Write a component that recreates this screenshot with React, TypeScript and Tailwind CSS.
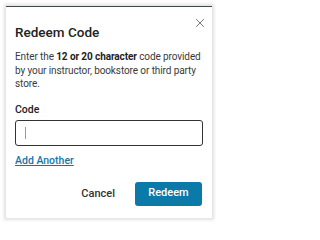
import { X } from "lucide-react";

const App = () => {
  return (
    <div className="w-[219px] h-[225px] bg-white p-[6px] font-['Roboto',sans-serif]">
      <div className="relative w-[206px] h-[212px] bg-white border-t border-[#3d4a4a] shadow-[0_0_3px_2px_rgba(0,0,0,0.12)] px-[9px] pt-[17px]">
        <button className="absolute right-[5px] top-[9px] text-[#666]">
          <X className="w-[14px] h-[14px]" strokeWidth={1.5} />
        </button>
        <h2 className="text-[13.5px] leading-[16px] font-medium text-[#222]">Redeem Code</h2>
        <p className="mt-[10px] text-[10px] leading-[13.5px] text-[#3a3a3a] tracking-[-0.1px]">
          Enter the <span className="font-bold text-[#222]">12 or 20 character</span> code provided by your instructor, bookstore or third party store.
        </p>
        <div className="mt-[12px] text-[10.5px] leading-[13px] font-medium text-[#222]">Code</div>
        <div className="mt-[4px] h-[26px] w-[188px] border-[1.5px] border-[#333] rounded-[3px] flex items-center pl-[9px]">
          <div className="w-[1px] h-[12px] bg-[#999]" />
        </div>
        <div className="mt-[8px] text-[10.5px] leading-[13px]">
          <a href="#" className="font-medium text-[#1576a6] underline">Add Another</a>
        </div>
        <div className="mt-[15px] flex items-center justify-end gap-[20px] pr-[1px]">
          <button className="text-[11px] leading-[13px] font-medium text-[#333]">Cancel</button>
          <button className="w-[67px] h-[24px] rounded-[3px] bg-[#0b7aa9] text-white text-[11px] font-medium">Redeem</button>
        </div>
      </div>
    </div>
  );
};

export default App;
